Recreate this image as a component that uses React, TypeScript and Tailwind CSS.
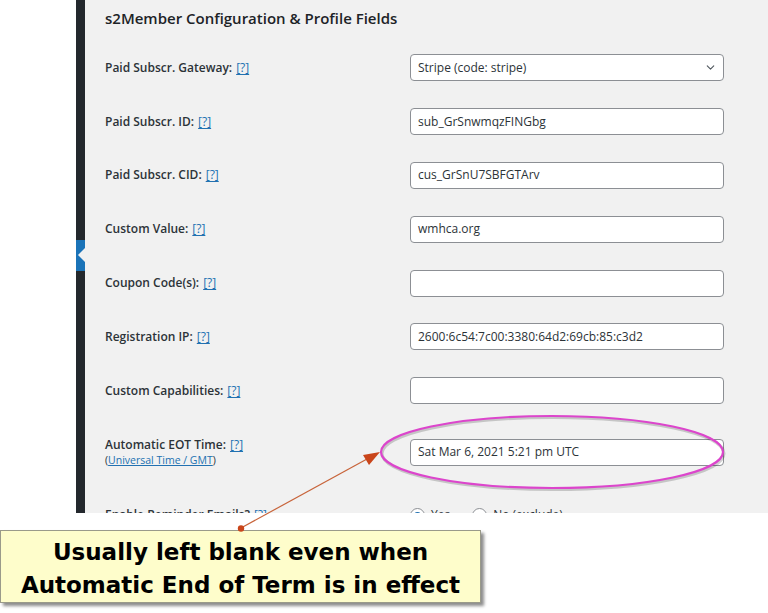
import { ChevronDown } from 'lucide-react';

const FIELDS = [
  { label: 'Paid Subscr. Gateway:', value: 'Stripe (code: stripe)', select: true },
  { label: 'Paid Subscr. ID:', value: 'sub_GrSnwmqzFINGbg' },
  { label: 'Paid Subscr. CID:', value: 'cus_GrSnU7SBFGTArv' },
  { label: 'Custom Value:', value: 'wmhca.org' },
  { label: 'Coupon Code(s):', value: '' },
  { label: 'Registration IP:', value: '2600:6c54:7c00:3380:64d2:69cb:85:c3d2' },
  { label: 'Custom Capabilities:', value: '' },
];

const ui = { fontFamily: '"Open Sans", "Noto Sans", sans-serif' };

function Help() {
  return <a className="ml-1 font-normal text-[#2271b1] underline underline-offset-2">[?]</a>;
}

function Field({ value, select }: { value: string; select?: boolean }) {
  return (
    <div className="flex h-[27px] w-[314px] items-center justify-between rounded-[4px] border border-[#8c8f94] bg-white pl-[7px] pr-[6px] text-[12px] text-[#2c3338]">
      <span>{value}</span>
      {select && <ChevronDown size={13} strokeWidth={2} className="text-[#50575e]" />}
    </div>
  );
}

function Radio({ checked, label }: { checked?: boolean; label: string }) {
  return (
    <div className="flex items-center gap-[6px]">
      <span className="flex h-[15px] w-[15px] items-center justify-center rounded-full border border-[#8c8f94] bg-white">
        {checked && <span className="h-[7px] w-[7px] rounded-full bg-[#2271b1]" />}
      </span>
      <span className="text-[12px] text-[#2c3338]">{label}</span>
    </div>
  );
}

export default function App() {
  return (
    <div className="relative h-[613px] w-[768px] overflow-hidden bg-white" style={ui}>
      <div className="flex h-[513px]">
        <div className="w-[76px] bg-white" />
        <div className="flex w-[9px] flex-col bg-[#23282d]">
          <div className="h-[240px]" />
          <div className="relative h-[31px] bg-[#1a73b8]">
            <span className="absolute right-0 top-[8px] h-0 w-0 border-y-[7px] border-r-[7px] border-y-transparent border-r-[#f1f1f1]" />
          </div>
        </div>
        <div className="flex-1 overflow-hidden bg-[#f1f1f1] pl-[20px] pt-[8px]">
          <h2 className="h-[20px] text-[15px] font-semibold leading-[20px] text-[#1d2327]">
            s2Member Configuration &amp; Profile Fields
          </h2>
          <div className="mt-[13px]">
            {FIELDS.map((f) => (
              <div key={f.label} className="flex h-[53.8px] items-center">
                <div className="w-[305px] text-[12px] font-semibold text-[#2c3338]">
                  {f.label}
                  <Help />
                </div>
                <Field value={f.value} select={f.select} />
              </div>
            ))}
            <div className="flex h-[69px] items-center">
              <div className="w-[305px] text-[#2c3338]">
                <div className="text-[12px] font-semibold leading-[17px]">
                  Automatic EOT Time:
                  <Help />
                </div>
                <div className="text-[10.5px] leading-[15px]">
                  (<a className="text-[#2271b1] underline">Universal Time / GMT</a>)
                </div>
              </div>
              <Field value="Sat Mar 6, 2021 5:21 pm UTC" />
            </div>
            <div className="flex h-[57px] items-center">
              <div className="w-[305px] text-[12px] font-semibold text-[#2c3338]">
                Enable Reminder Emails?
                <Help />
              </div>
              <div className="flex items-center gap-[22px]">
                <Radio checked label="Yes" />
                <Radio label="No (exclude)" />
              </div>
            </div>
          </div>
        </div>
      </div>

      <div
        className="mt-[17px] h-[73px] w-[481px] border border-[#9a9a8a] bg-[#fefdcb] pt-[5px] text-center text-[23px] font-bold leading-[33px] text-black shadow-[3px_3px_3px_rgba(0,0,0,0.45)]"
        style={{ fontFamily: '"DejaVu Sans", Verdana, sans-serif' }}
      >
        <p>Usually left blank even when</p>
        <p>Automatic End of Term is in effect</p>
      </div>

      <svg className="pointer-events-none absolute inset-0" width="768" height="613" viewBox="0 0 768 613">
        <ellipse cx="553" cy="453.5" rx="171" ry="36" fill="none" stroke="rgba(0,0,0,0.18)" strokeWidth="3" />
        <ellipse cx="552" cy="452" rx="171" ry="36" fill="none" stroke="#dc45cc" strokeWidth="2.2" />
        <line x1="241" y1="528" x2="367" y2="459" stroke="#c8643a" strokeWidth="1.2" />
        <polygon points="380,452 369,465 363,455" fill="#c9451a" />
        <circle cx="241" cy="528.5" r="3.2" fill="#c9451a" />
      </svg>
    </div>
  );
}
